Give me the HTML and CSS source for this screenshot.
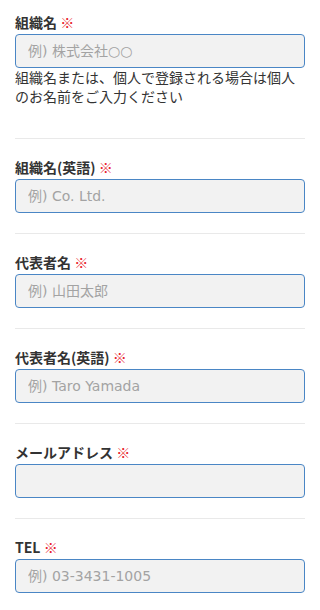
FILE: index.html
```html
<!DOCTYPE html>
<html lang="ja">
<head>
<meta charset="utf-8">
<title>フォーム</title>
<link rel="stylesheet" href="styles.css">
</head>
<body>
<form class="form">
  <div class="field field-first">
    <label class="label">組織名 <span class="req">※</span></label>
    <input class="input" type="text" placeholder="例) 株式会社○○">
    <p class="help">組織名または、個人で登録される場合は個人のお名前をご入力ください</p>
  </div>
  <div class="field">
    <label class="label">組織名(英語) <span class="req">※</span></label>
    <input class="input" type="text" placeholder="例) Co. Ltd.">
  </div>
  <div class="field">
    <label class="label">代表者名 <span class="req">※</span></label>
    <input class="input" type="text" placeholder="例) 山田太郎">
  </div>
  <div class="field">
    <label class="label">代表者名(英語) <span class="req">※</span></label>
    <input class="input" type="text" placeholder="例) Taro Yamada">
  </div>
  <div class="field">
    <label class="label">メールアドレス <span class="req">※</span></label>
    <input class="input" type="email">
  </div>
  <div class="field">
    <label class="label">TEL <span class="req">※</span></label>
    <input class="input" type="tel" placeholder="例) 03-3431-1005">
  </div>
</form>
</body>
</html>
```

FILE: styles.css
```css
html, body {
  margin: 0;
  background: #ffffff;
}
body {
  padding: 0 15px;
  font-family: "Noto Sans CJK JP", "Noto Sans", sans-serif;
  color: #333333;
}
.form {
  display: flex;
  flex-direction: column;
}
.field {
  display: flex;
  flex-direction: column;
  border-top: 1px solid #e9e9e9;
  padding: 18px 0 20px;
}
.field-first {
  border-top: none;
  padding-top: 12px;
}
.label {
  display: block;
  font-size: 14px;
  line-height: 20px;
  font-weight: 700;
  margin-bottom: 2px;
  color: #333333;
}
.req {
  color: #e8202a;
  font-weight: 400;
}
.input {
  box-sizing: border-box;
  width: 100%;
  height: 34px;
  margin: 0;
  padding: 0 12px;
  border: 1px solid #4a86c5;
  border-radius: 4px;
  background: #f2f2f2;
  font-family: "DejaVu Sans", "Noto Sans CJK JP", sans-serif;
  font-size: 14px;
  color: #333333;
  outline: none;
}
.input::placeholder {
  color: #a3a3a3;
}
.help {
  margin: 0 0 12px;
  font-size: 14px;
  line-height: 19px;
  color: #333333;
}
```
